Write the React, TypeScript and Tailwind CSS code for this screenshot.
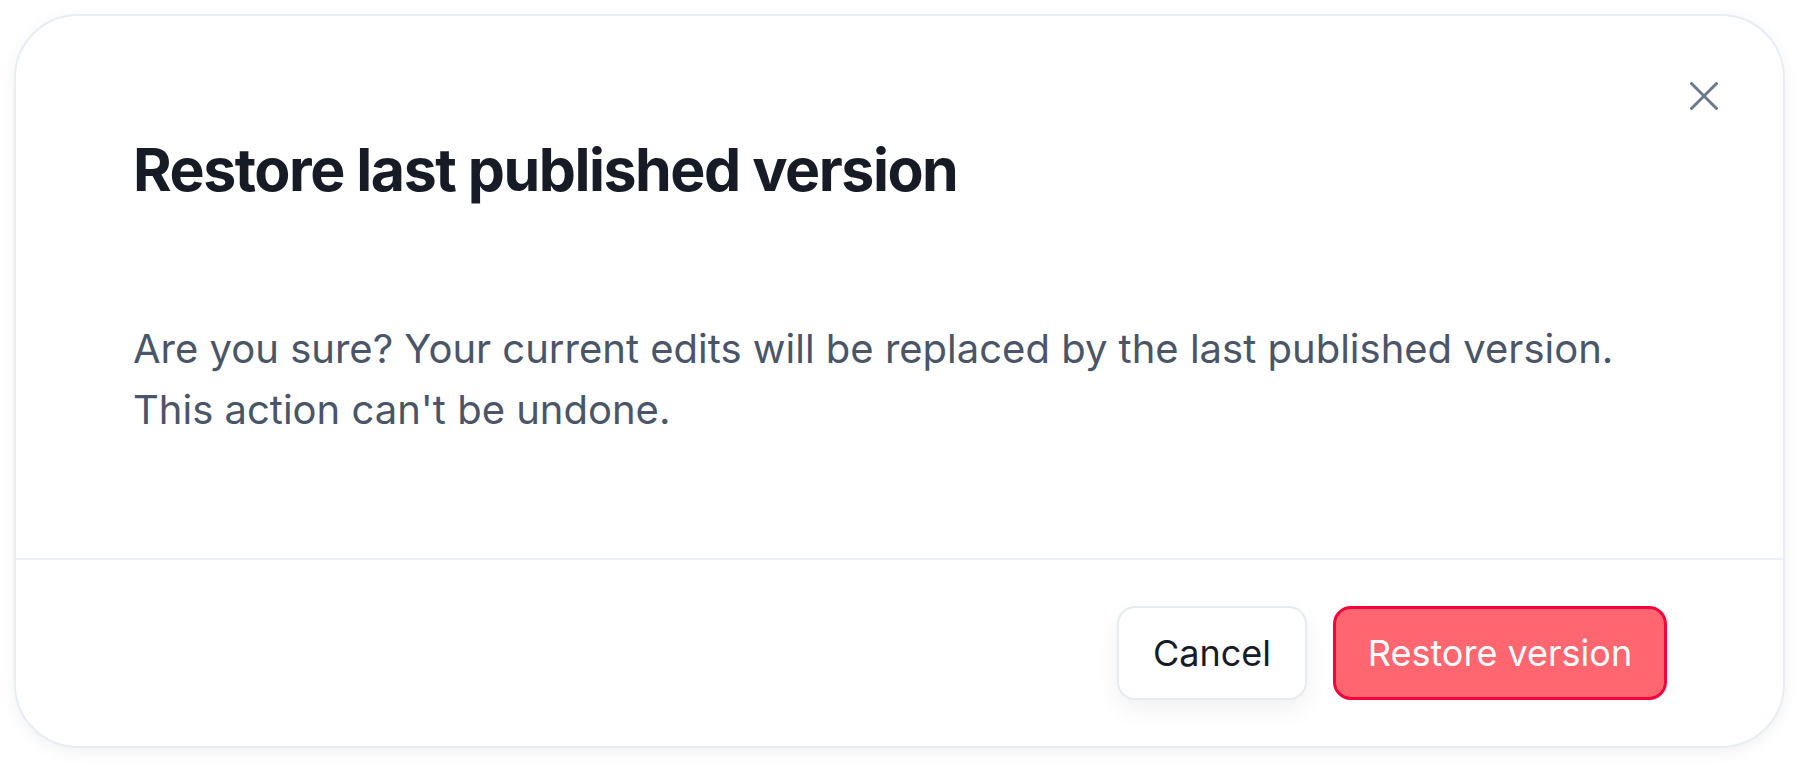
export default function App() {
  return (
    <div className="min-h-screen bg-white p-[14px] font-['Inter',sans-serif]">
      <div className="flex h-[734px] w-[1771px] flex-col rounded-[64px] border-2 border-[#e8edf3] bg-white shadow-[0_4px_16px_rgba(15,23,42,0.06)]">
        <div className="relative flex-1 pl-[117px] pr-[120px] pt-[118px]">
          <button className="absolute right-[59px] top-[60px] flex h-[40px] w-[40px] items-center justify-center text-[#6b7a90]">
            <svg width="28" height="28" viewBox="0 0 28 28" fill="none" stroke="currentColor" strokeWidth="3" strokeLinecap="round">
              <path d="M1.5 1.5 L26.5 26.5 M26.5 1.5 L1.5 26.5" />
            </svg>
          </button>
          <h2 className="text-[59px] font-bold leading-[72px] tracking-[-0.025em] text-[#161b26]">
            Restore last published version
          </h2>
          <p className="mt-[112px] text-[40px] leading-[61px] text-[#4a5568]">
            Are you sure? Your current edits will be replaced by the last published version.
            <br />
            This action can't be undone.
          </p>
        </div>
        <div className="flex h-[188px] items-center justify-end gap-[26px] border-t-2 border-[#edf1f6] pr-[116px]">
          <button className="h-[94px] w-[190px] rounded-[18px] border-2 border-[#e6ebf2] bg-white text-[36px] text-[#161b26] shadow-[0_10px_24px_rgba(15,23,42,0.06)]">
            Cancel
          </button>
          <button className="h-[94px] w-[334px] rounded-[18px] border-[3px] border-[#f5043d] bg-[#ff6670] text-[36px] text-white">
            Restore version
          </button>
        </div>
      </div>
    </div>
  );
}
